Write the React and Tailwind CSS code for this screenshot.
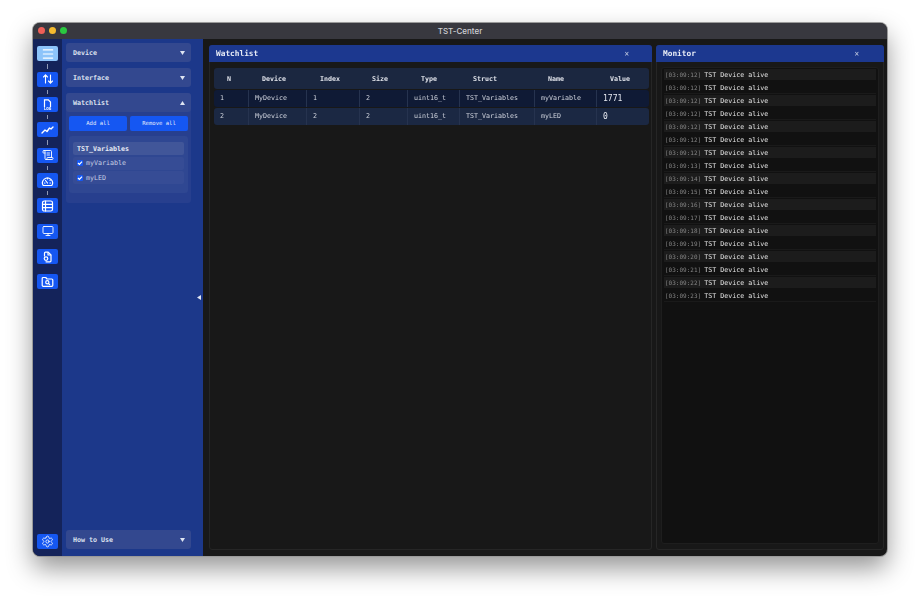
import { Menu, ArrowUpDown, ScrollText, Monitor, Settings } from "lucide-react";

const MONO = "font-['DejaVu_Sans_Mono','Liberation_Mono',monospace]";

const TIMES = [
  "12", "12", "12", "12", "12", "12", "12", "13", "14",
  "15", "16", "17", "18", "19", "20", "21", "22", "23",
];

const COLUMNS = ["N", "Device", "Index", "Size", "Type", "Struct", "Name", "Value"];

const ROWS = [
  ["1", "MyDevice", "1", "2", "uint16_t", "TST_Variables", "myVariable", "1771"],
  ["2", "MyDevice", "2", "2", "uint16_t", "TST_Variables", "myLED", "0"],
];

const HEAD_GRID = "grid grid-cols-[30px_60px_52px_48px_50px_62px_80px_48px]";
const ROW_GRID = "grid grid-cols-[34px_58px_53px_48px_52px_75px_62px_53px]";

function Icon({ children }) {
  return (
    <svg width="13" height="12" viewBox="0 0 13 12" fill="none" stroke="white" strokeWidth="1.2" strokeLinecap="round" strokeLinejoin="round">
      {children}
    </svg>
  );
}

function LogIcon() {
  return (
    <span className="flex flex-col items-center">
      <svg width="9" height="8" viewBox="0 0 9 8" fill="none" stroke="white" strokeWidth="1.2">
        <path d="M1.5 8V.8h3.8L7.5 3v5" />
      </svg>
      <span className={`${MONO} text-[4.2px] leading-[4px] font-bold text-white`}>LOG</span>
    </span>
  );
}

function RailButton({ children, active, linked }) {
  return (
    <div className="flex h-[25.35px] flex-col items-center">
      <div
        className={`flex h-[15px] w-[21px] shrink-0 items-center justify-center rounded-[2px] ${
          active ? "bg-[#8dc4fa]" : "bg-[#1557f2]"
        }`}
      >
        {children}
      </div>
      {linked && <div className="my-[3px] w-px flex-1 bg-[#8f99b5]" />}
    </div>
  );
}

function Caret({ up }) {
  return (
    <svg width="5" height="4" viewBox="0 0 5 4" fill="#dfe5f2">
      <path d={up ? "M2.5 0 5 4H0z" : "M0 0h5L2.5 4z"} />
    </svg>
  );
}

function Accordion({ label, open }) {
  return (
    <div className="flex h-[19px] shrink-0 items-center justify-between rounded-[3px] bg-[#33488f] pr-[6px] pl-[7px]">
      <span className={`${MONO} pt-[2px] text-[6.65px] font-bold text-[#dde2ef]`}>{label}</span>
      <Caret up={open} />
    </div>
  );
}

function Variable({ label }) {
  return (
    <div className="flex h-[13px] items-center gap-[3px] rounded-[2px] bg-[#364c95] pl-[4px]">
      <span className="flex h-[6px] w-[6px] items-center justify-center rounded-[1px] bg-[#1557f2]">
        <svg width="6" height="6" viewBox="0 0 6 6" fill="none" stroke="white" strokeWidth="1.2">
          <path d="M1 3l1.4 1.4L5 1.6" />
        </svg>
      </span>
      <span className={`${MONO} pt-[2px] text-[6.65px] text-[#c6cfe4]`}>{label}</span>
    </div>
  );
}

function PanelTitle({ title, closePad }) {
  return (
    <div className="-mx-px -mt-px flex h-[17px] shrink-0 items-center justify-between rounded-t-[3px] bg-[#1c388f]">
      <span className={`${MONO} pl-[7px] text-[7.8px] font-bold text-[#e8ecf6]`}>{title}</span>
      <span className={`${closePad} text-[8px] leading-none text-[#c5cde2]`}>×</span>
    </div>
  );
}

export default function App() {
  return (
    <div className="h-[600px] w-[920px] bg-white pt-[23px] pl-[33px]">
      <div className="flex h-[533px] w-[854px] flex-col overflow-hidden rounded-[7px] bg-[#181818] shadow-[0_0_0_1px_#9a9a9a,0_12px_26px_rgba(0,0,0,0.42)] [will-change:opacity]">
        <div className="relative flex h-[16px] shrink-0 items-center justify-center bg-[#38383f]">
          <div className="absolute top-[4px] left-[5px] flex gap-[4px]">
            <span className="h-[7px] w-[7px] rounded-full bg-[#ee5f57]" />
            <span className="h-[7px] w-[7px] rounded-full bg-[#f5bb2f]" />
            <span className="h-[7px] w-[7px] rounded-full bg-[#2ac840]" />
          </div>
          <span className="font-['Inter',sans-serif] text-[8px] font-medium text-[#cfcfd3]">TST-Center</span>
        </div>

        <div className="flex min-h-0 flex-1">
          {/* icon rail */}
          <div className="flex w-[29px] shrink-0 flex-col justify-between bg-[#14235a] pt-[7.4px] pb-[7px]">
            <div className="flex flex-col">
              <RailButton active linked><Menu size={14} color="white" strokeWidth={2} /></RailButton>
              <RailButton linked><ArrowUpDown size={12} color="white" strokeWidth={2.2} /></RailButton>
              <RailButton linked><LogIcon /></RailButton>
              <RailButton linked>
                <Icon><path d="M1 9l3-3 2 1.5L8.5 4 10 5l2-2" strokeWidth="1.4" /></Icon>
              </RailButton>
              <RailButton linked><ScrollText size={12} color="white" strokeWidth={1.8} /></RailButton>
              <RailButton linked>
                <Icon>
                  <path d="M2.2 10.5a5 5 0 1 1 8.6 0z" />
                  <path d="M6.5 8 4.5 5.5M3.5 8h.5M9 8h.5M6.5 3.6v.4M9.3 5l-.3.3" />
                </Icon>
              </RailButton>
              <RailButton>
                <Icon>
                  <rect x="1.5" y="1" width="10" height="10" rx="1.8" />
                  <path d="M4.5 1v10M1.5 4.3h10M1.5 7.7h10" />
                </Icon>
              </RailButton>
              <RailButton><Monitor size={12} color="white" strokeWidth={1.8} /></RailButton>
              <RailButton>
                <Icon>
                  <path d="M3.5 5V2.2a1 1 0 0 1 1-1h2.7L10 4v5.8a1 1 0 0 1-1 1H5" />
                  <circle cx="5" cy="7.6" r="1.8" />
                  <path d="M7 1.5V4h2.7" />
                </Icon>
              </RailButton>
              <RailButton>
                <Icon>
                  <path d="M1.2 2.5a1 1 0 0 1 1-1h2.5l1.3 1.5h4.8a1 1 0 0 1 1 1v5.3a1 1 0 0 1-1 1H2.2a1 1 0 0 1-1-1z" />
                  <circle cx="6.3" cy="6.3" r="1.6" />
                  <path d="M7.5 7.5l1.2 1.2" />
                </Icon>
              </RailButton>
            </div>
            <div className="flex justify-center">
              <div className="flex h-[15px] w-[21px] items-center justify-center rounded-[2px] bg-[#1557f2]">
                <Settings size={13} color="white" strokeWidth={1.5} />
              </div>
            </div>
          </div>

          {/* side panel */}
          <div className="relative flex w-[141px] shrink-0 flex-col justify-between bg-[#1c388a] pt-[4px] pr-[12px] pb-[7px] pl-[4px]">
            <div className="flex flex-col gap-[6px]">
              <Accordion label="Device" />
              <Accordion label="Interface" />
              <div className="flex h-[110px] flex-col rounded-[3px] bg-[#273f8e]">
                <Accordion label="Watchlist" open />
                <div className="mt-[4px] flex gap-[3px] px-[3px]">
                  <button className={`${MONO} h-[15px] flex-1 rounded-[2px] bg-[#1557f2] pb-[1px] text-[5.6px] text-[#e4ebfc]`}>Add all</button>
                  <button className={`${MONO} h-[15px] flex-1 rounded-[2px] bg-[#1557f2] pb-[1px] text-[5.6px] text-[#e4ebfc]`}>Remove all</button>
                </div>
                <div className="mx-[3px] mt-[5px] flex h-[57px] flex-col gap-[1.5px] rounded-[3px] bg-[#2f4792] p-[4px] pt-[6px]">
                  <div className={`${MONO} flex h-[13px] items-center rounded-[2px] bg-[#415699] pt-[2px] pl-[4px] text-[6.65px] font-bold text-[#e8ebf5]`}>
                    TST_Variables
                  </div>
                  <Variable label="myVariable" />
                  <Variable label="myLED" />
                </div>
              </div>
            </div>
            <Accordion label="How to Use" />
            <svg className="absolute top-[256px] right-[2px]" width="4" height="5" viewBox="0 0 4 5" fill="#dfe5f2">
              <path d="M4 0v5L0 2.5z" />
            </svg>
          </div>

          {/* main area */}
          <div className="flex min-w-0 flex-1 gap-[4px] pt-[6px] pr-[3px] pb-[6px] pl-[6px]">
            <div className="flex w-[443px] shrink-0 flex-col rounded-[3px] border border-[#262626]">
              <PanelTitle title="Watchlist" closePad="pr-[23px]" />
              <div className="flex flex-col gap-[1px] pt-[6px] pr-[2px] pl-[4px]">
                <div className={`${HEAD_GRID} h-[21px] items-center rounded-[3px] bg-[#1b2740] pt-[2px]`}>
                  {COLUMNS.map((name) => (
                    <span key={name} className={`${MONO} text-center text-[6.65px] font-bold text-[#e0e3ea]`}>
                      {name}
                    </span>
                  ))}
                </div>
                {ROWS.map((row, i) => (
                  <div
                    key={row[0]}
                    className={`${ROW_GRID} h-[17px] items-stretch rounded-[3px] ${i === 0 ? "bg-[#0f1a35]" : "bg-[#1b2843]"}`}
                  >
                    {row.map((cell, c) => (
                      <span
                        key={c}
                        className={`${MONO} flex items-center pl-[6px] ${c > 0 ? "border-l border-[#26334f]" : ""} ${
                          c === 7 ? "text-[8px] text-[#e6e9f0]" : "text-[6.65px] text-[#d0d4de]"
                        }`}
                      >
                        {cell}
                      </span>
                    ))}
                  </div>
                ))}
              </div>
            </div>

            <div className="flex min-w-0 flex-1 flex-col rounded-[3px] border border-[#262626]">
              <PanelTitle title="Monitor" closePad="pr-[25px]" />
              <div className="mx-[4px] mt-[5px] mb-[5px] flex-1 rounded-[3px] border border-[#1e1e1e] bg-[#111111] px-[2px]">
                {TIMES.map((sec, i) => (
                  <div key={i} className="flex h-[13px] items-center">
                    <div
                      className={`${MONO} flex h-[11px] w-full items-baseline gap-[3px] pl-[1px] leading-[11px] ${
                        i % 2 === 0 ? "bg-[#1c1c1c]" : "shadow-[0_1px_0_#1a1a1a]"
                      }`}
                    >
                      <span className="text-[6px] text-[#858585]">[03:09:{sec}]</span>
                      <span className="text-[6.65px] text-[#e2e2e2]">TST Device alive</span>
                    </div>
                  </div>
                ))}
              </div>
            </div>
          </div>
        </div>
      </div>
    </div>
  );
}
